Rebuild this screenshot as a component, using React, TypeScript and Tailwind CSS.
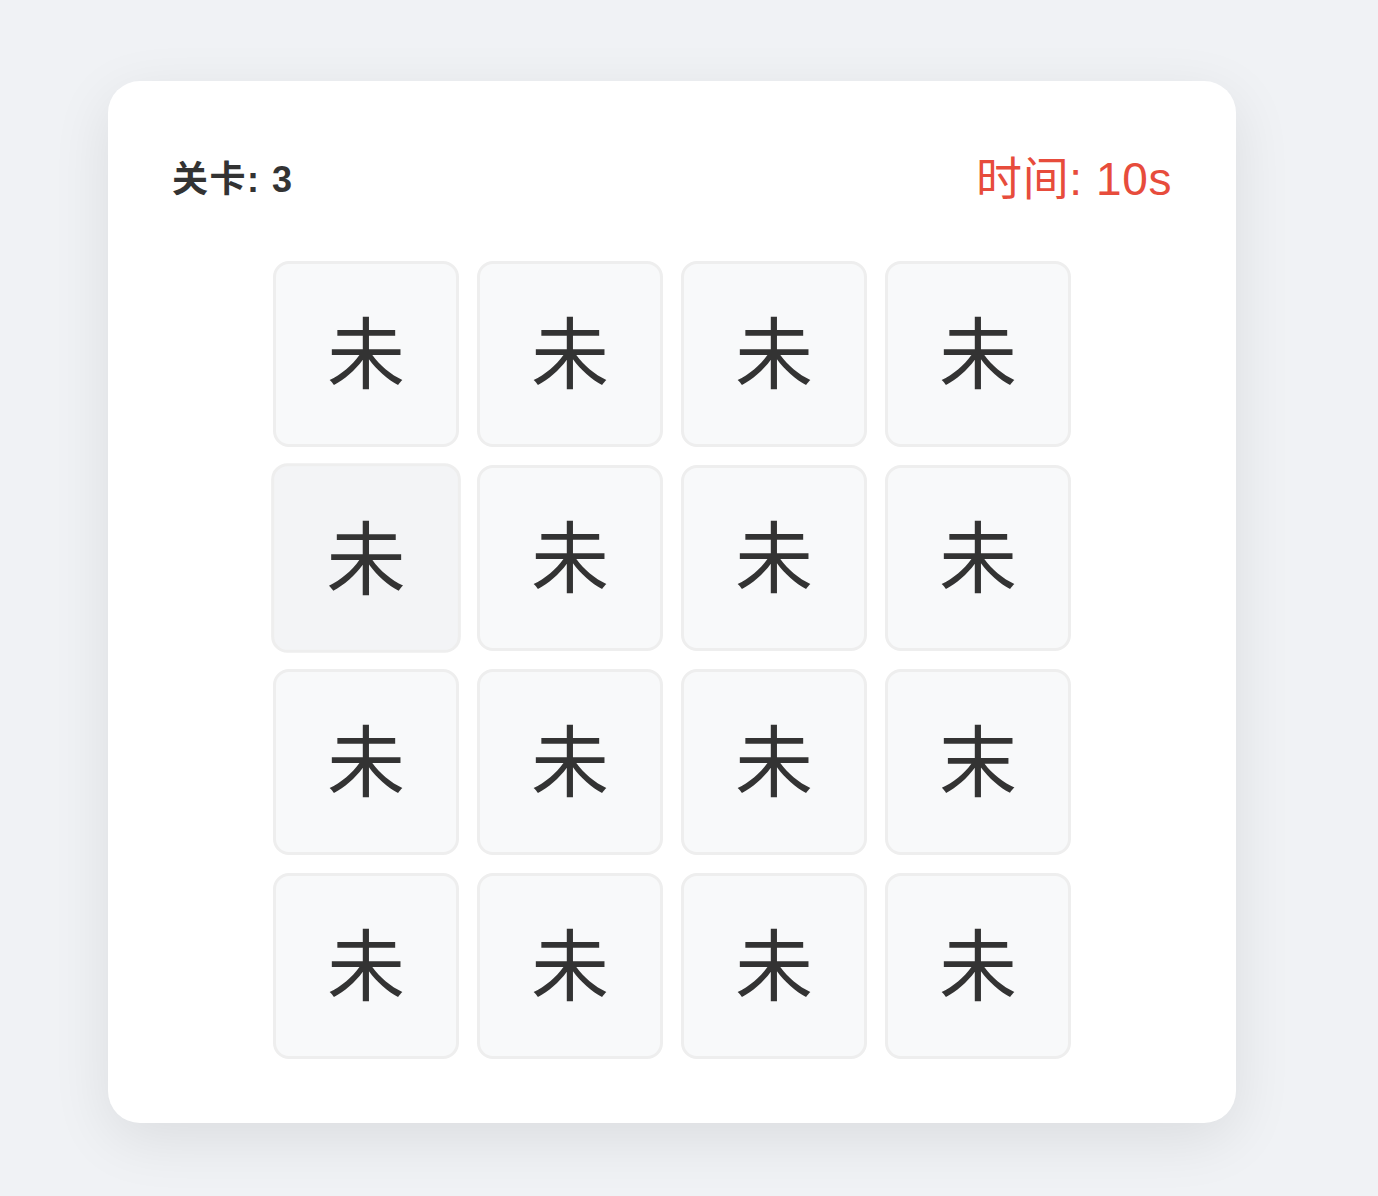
import React from "react";

const chars = Array.from({ length: 16 }, (_, i) => (i === 11 ? "末" : "未"));

export default function App() {
  return (
    <div
      className="min-h-screen bg-[#f0f2f5] pl-[108px] pt-[81px] pb-[73px]"
      style={{ fontFamily: '"Liberation Sans", "Noto Sans CJK SC", sans-serif' }}
    >
      <div className="w-[1128px] rounded-[32px] bg-white p-[64px] shadow-[0_16px_60px_rgba(0,0,0,0.09)]">
        <div className="mb-[47px] flex h-[69px] items-center justify-between">
          <div className="text-[36px] font-bold tracking-[1.5px] text-[#333333]">关卡: 3</div>
          <div className="text-[46px] tracking-[0.6px] text-[#e74c3c]">时间: 10s</div>
        </div>
        <div className="grid grid-cols-[repeat(4,186px)] justify-center gap-[18px]">
          {chars.map((c, i) => (
            <button
              key={i}
              className={
                i === 4
                  ? "flex h-[186px] w-[186px] scale-[1.02] items-center justify-center rounded-[16px] border-[3px] border-[#eeeeee] bg-[#f3f4f6] pb-[10px] text-[78px] leading-none text-[#333333]"
                  : "flex h-[186px] w-[186px] items-center justify-center rounded-[16px] border-[3px] border-[#eeeeee] bg-[#f8f9fa] pb-[10px] text-[78px] leading-none text-[#333333]"
              }
              style={{ fontFamily: '"Noto Sans CJK SC", sans-serif' }}
            >
              {c}
            </button>
          ))}
        </div>
      </div>
    </div>
  );
}
